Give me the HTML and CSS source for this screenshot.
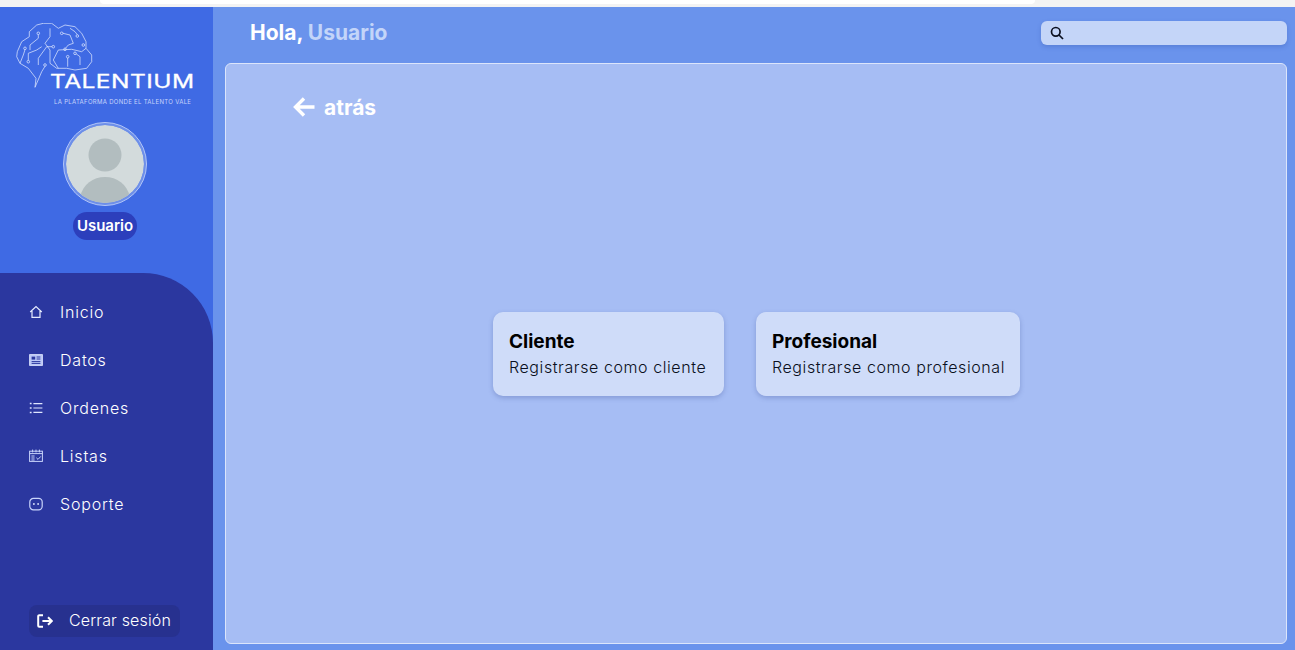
FILE: index.html
```html
<!DOCTYPE html>
<html lang="es">
<head>
<meta charset="utf-8">
<title>Talentium</title>
<link rel="stylesheet" href="styles.css">
</head>
<body>
<div class="topstrip"><div class="strip-notch"></div></div>
<div class="app">
  <aside class="sidebar">
    <div class="sidebar-top">
      <div class="logo">
        <svg class="brain" viewBox="0 0 80 72" fill="none" stroke="#e6eeff" stroke-width=".7">
          <path d="M20 64.3 21 55.3 13.3 45.3 5 40.3 1.7 33.7 2.3 28.7 6.7 18.7 14.3 13.7V8.7L21.7 2 28.3.3H36.7L43.3 5.3 50 2 60 3.7 66.7 10.3 71 18.7V25.3L76.7 32V38.7L71.7 45.3 60 47 51.7 45.3H41.7L35 40.3V27L30 20.3 35 13.7V5.3"/>
          <path d="M23.3 11.6V15.3L15 22V27M10 26.6 8.3 32 5 40.3M13.3 37.4V30.3L21.7 27 26.7 23.7M37 23.7H31.7L23.3 35.3V42M30 43.3 26.7 48.7 20 64.3"/>
          <path d="M48 10.3 55 12 58.3 20.3 53.3 22 50.6 25.2M62.3 11.7 60 8.7 55 5.3M61.2 30.9 65 33.7V42M52.7 35V43.7M43.3 27 38.3 37 43.3 45.3M43.3 27 56.7 26.3 66.7 28.7 71 25.3"/>
          <circle cx="23.3" cy="10.3" r="1.3"/><circle cx="10" cy="25.3" r="1.3"/><circle cx="13.3" cy="38.7" r="1.3"/><circle cx="38.3" cy="23.7" r="1.3"/><circle cx="30" cy="42" r="1.3"/><circle cx="46.7" cy="10.3" r="1.3"/><circle cx="50" cy="26.3" r="1.3"/><circle cx="62.3" cy="13" r="1.3"/><circle cx="68.3" cy="22" r="1.3"/><circle cx="60" cy="30.3" r="1.3"/><circle cx="52.7" cy="33.7" r="1.3"/>
        </svg>
        <div class="wordmark">TALENTIUM</div>
        <div class="tagline">LA PLATAFORMA DONDE EL TALENTO VALE</div>
      </div>
      <div class="avatar">
        <svg viewBox="0 0 78 78" class="avatar-img">
          <circle cx="39" cy="39" r="39" fill="#d3dbdc"/>
          <circle cx="39" cy="30" r="16.5" fill="#b2bdbf"/>
          <path d="M14 72c3-13 13-20 25-20s22 7 25 20a39 39 0 0 1-50 0z" fill="#b2bdbf"/>
        </svg>
      </div>
      <div class="username">Usuario</div>
    </div>
    <nav class="sidebar-nav">
      <ul class="menu">
        <li class="menu-item">
          <svg class="mi" viewBox="0 0 14 14" fill="none" stroke="currentColor" stroke-width="1.2"><path d="M1.2 7 7 1.5 12.8 7M3 6v6.4h8V6"/></svg>
          <span>Inicio</span>
        </li>
        <li class="menu-item">
          <svg class="mi" viewBox="0 0 14 14"><rect x=".6" y="1.6" width="12.8" height="10.8" fill="#bcc8f8" stroke="#dfe6ff" stroke-width=".8"/><rect x="2.6" y="3.6" width="3.6" height="3" fill="#2b379f"/><path d="M7.6 4h3.8M7.6 6h3.8M2.6 8.6h8.8M2.6 10.4h8.8" stroke="#2b379f"/></svg>
          <span>Datos</span>
        </li>
        <li class="menu-item">
          <svg class="mi" viewBox="0 0 14 14" fill="none" stroke="#dfe6ff" stroke-width="1.1"><path d="M4.4 2.6h9M4.4 7h9M4.4 11.4h9"/><path d="M.8 2.6h1.8M.8 7h1.8M.8 11.4h1.8" stroke-width="1.5"/></svg>
          <span>Ordenes</span>
        </li>
        <li class="menu-item">
          <svg class="mi" viewBox="0 0 14 14" fill="none" stroke="#c9d4fb" stroke-width="1"><rect x=".6" y="2.2" width="12.8" height="10.2"/><path d="M3.6.6v2.8M7 .6v2.8M10.4.6v2.8M.6 4.6h12.8M2.4 7h3.2M2.4 9h3.2M2.4 11h3.2M7.4 8.8l1.6 1.6 2.8-3"/></svg>
          <span>Listas</span>
        </li>
        <li class="menu-item">
          <svg class="mi" viewBox="0 0 14 14" fill="none" stroke="#c9d4fb" stroke-width="1.2"><rect x=".8" y="1.4" width="12.4" height="11.4" rx="3.6"/><circle cx="4.9" cy="7" r=".9" fill="#dfe6ff" stroke="none"/><circle cx="9.1" cy="7" r=".9" fill="#dfe6ff" stroke="none"/></svg>
          <span>Soporte</span>
        </li>
      </ul>
      <div class="logout">
        <svg class="logout-icon" viewBox="0 0 16 14" fill="none" stroke="#fff" stroke-width="2"><path d="M6 1.2H2.2a1 1 0 0 0-1 1v9.6a1 1 0 0 0 1 1H6M5.4 7h9.4M11 3.2 14.8 7 11 10.800"/></svg>
        <span class="logout-label">Cerrar sesión</span>
      </div>
    </nav>
  </aside>
  <main class="main">
    <header class="topbar">
      <h1 class="greeting">Hola, <span class="greeting-name">Usuario</span></h1>
      <div class="search">
        <svg class="search-icon" viewBox="0 0 14 14" fill="none" stroke="#0b1020" stroke-width="1.7"><circle cx="5.8" cy="5.8" r="4.3"/><path d="m9 9 4 4"/></svg>
      </div>
    </header>
    <section class="panel">
      <div class="back">
        <svg class="back-icon" viewBox="0 0 22 20" fill="none" stroke="#fff" stroke-width="3.4"><path d="M21.5 10H3M11 1.5 2.5 10l8.500 8.500"/></svg>
        <span>atrás</span>
      </div>
      <div class="cards">
        <article class="card card-client">
          <h2 class="card-title">Cliente</h2>
          <p class="card-text">Registrarse como cliente</p>
        </article>
        <article class="card card-pro">
          <h2 class="card-title">Profesional</h2>
          <p class="card-text">Registrarse como profesional</p>
        </article>
      </div>
    </section>
  </main>
</div>
</body>
</html>
```
FILE: styles.css
```css
* { box-sizing: border-box; }
html, body { margin: 0; height: 100%; }
body {
  width: 1295px;
  height: 650px;
  overflow: hidden;
  background: #f3f3f3;
  font-family: "Inter", "Noto Sans", "Liberation Sans", sans-serif;
  display: flex;
  flex-direction: column;
}
.topstrip { height: 7px; flex: none; background: #f3f3f3; position: relative; }
.strip-notch { height: 4px; margin: 0 260px 0 100px; background: #fff; border-radius: 0 0 6px 6px; }
.app { flex: 1; display: flex; min-height: 0; }

.sidebar {
  width: 213px;
  flex: none;
  background: #3f6ae4;
  display: flex;
  flex-direction: column;
}
.sidebar-top { height: 266px; flex: none; display: flex; flex-direction: column; align-items: center; padding-right: 3px; }
.logo { align-self: flex-start; width: 210px; height: 98px; padding-top: 16px; display: flex; flex-direction: column; align-items: flex-start; position: relative; flex: none; }
.brain { width: 80px; height: 72px; position: absolute; top: 16px; left: 15px; }
.wordmark {
  margin: 49px 0 0 50px;
  position: relative;
  color: #fff;
  font-size: 19px;
  line-height: 20px;
  letter-spacing: .35px;
  font-weight: 400;
  -webkit-text-stroke: .3px #fff;
  transform: scaleX(1.29);
  transform-origin: left center;
}
.tagline { margin: 6px 0 0 54px; color: #c6d4fb; font-size: 6px; line-height: 8px; letter-spacing: .31px; white-space: nowrap; }
.avatar {
  margin-top: 17px;
  width: 84px;
  height: 84px;
  padding: 2px;
  border-radius: 50%;
  border: 1px solid #b3c6f8;
  background: #6d8fe9;
  flex: none;
}
.avatar-img { display: block; width: 78px; height: 78px; border-radius: 50%; }
.username {
  margin-top: 6px;
  height: 28px;
  padding: 0 4px;
  border-radius: 14px;
  background: #2c3fbc;
  color: #fff;
  font-size: 15px;
  font-weight: 600;
  line-height: 28px;
}

.sidebar-nav {
  flex: 1;
  background: #2b379f;
  border-radius: 0 70px 0 0;
  display: flex;
  flex-direction: column;
  padding: 15px 0 13px 29px;
}
.menu { list-style: none; margin: 0; padding: 0; flex: 1; display: flex; flex-direction: column; }
.menu-item {
  height: 48px;
  display: flex;
  align-items: center;
  gap: 17px;
  color: #fff;
  font-size: 16px;
  font-weight: 300;
  letter-spacing: .8px;
}
.mi { width: 14px; height: 14px; flex: none; color: #e6ecff; }
.logout {
  width: 151px;
  height: 32px;
  border-radius: 8px;
  background: #27318f;
  color: #fff;
  display: flex;
  align-items: center;
  padding-left: 8px;
  gap: 16px;
  font-size: 16px;
  font-weight: 300;
  letter-spacing: .15px;
  white-space: nowrap;
}
.logout-icon { width: 16px; height: 14px; flex: none; }
.logout-label { padding-bottom: 2px; }

.main {
  flex: 1;
  background: #6a93ec;
  display: flex;
  flex-direction: column;
  padding: 0 8px 6px 12px;
  min-width: 0;
}
.topbar { height: 56px; flex: none; display: flex; align-items: flex-start; justify-content: space-between; padding-left: 25px; }
.greeting { margin: 13px 0 0; color: #fff; font-size: 21px; line-height: 26px; font-weight: 700; }
.greeting-name { color: #c3d5f9; }
.search {
  margin-top: 14px;
  width: 246px;
  height: 24px;
  border-radius: 6px;
  background: #c4d5f8;
  box-shadow: 0 2px 4px rgba(40, 70, 160, .25);
  display: flex;
  align-items: center;
  padding-left: 9px;
}
.search-icon { width: 14px; height: 14px; }

.panel {
  flex: 1;
  min-height: 0;
  border: 1px solid #dbe5fb;
  border-radius: 6px;
  background: #a6bdf4;
  display: flex;
  flex-direction: column;
  padding: 31px 0 0 67px;
}
.back { display: flex; align-items: center; gap: 9px; height: 24px; color: #fff; font-size: 21px; font-weight: 700; }
.back-icon { width: 22px; height: 20px; }
.cards { display: flex; gap: 32px; margin: 193px 0 0 200px; }
.card {
  height: 84px;
  padding: 18px 16px 0;
  border-radius: 10px;
  background: #cfdcf9;
  box-shadow: 0 2px 5px rgba(50, 70, 140, .28);
  white-space: nowrap;
}
.card-client { width: 231px; }
.card-pro { width: 264px; }
.card-title { margin: 0; color: #000; font-size: 19px; line-height: 24px; font-weight: 700; }
.card-text { margin: 2px 0 0; color: #0a0f20; font-size: 16px; line-height: 22px; font-weight: 300; letter-spacing: .58px; }
```
